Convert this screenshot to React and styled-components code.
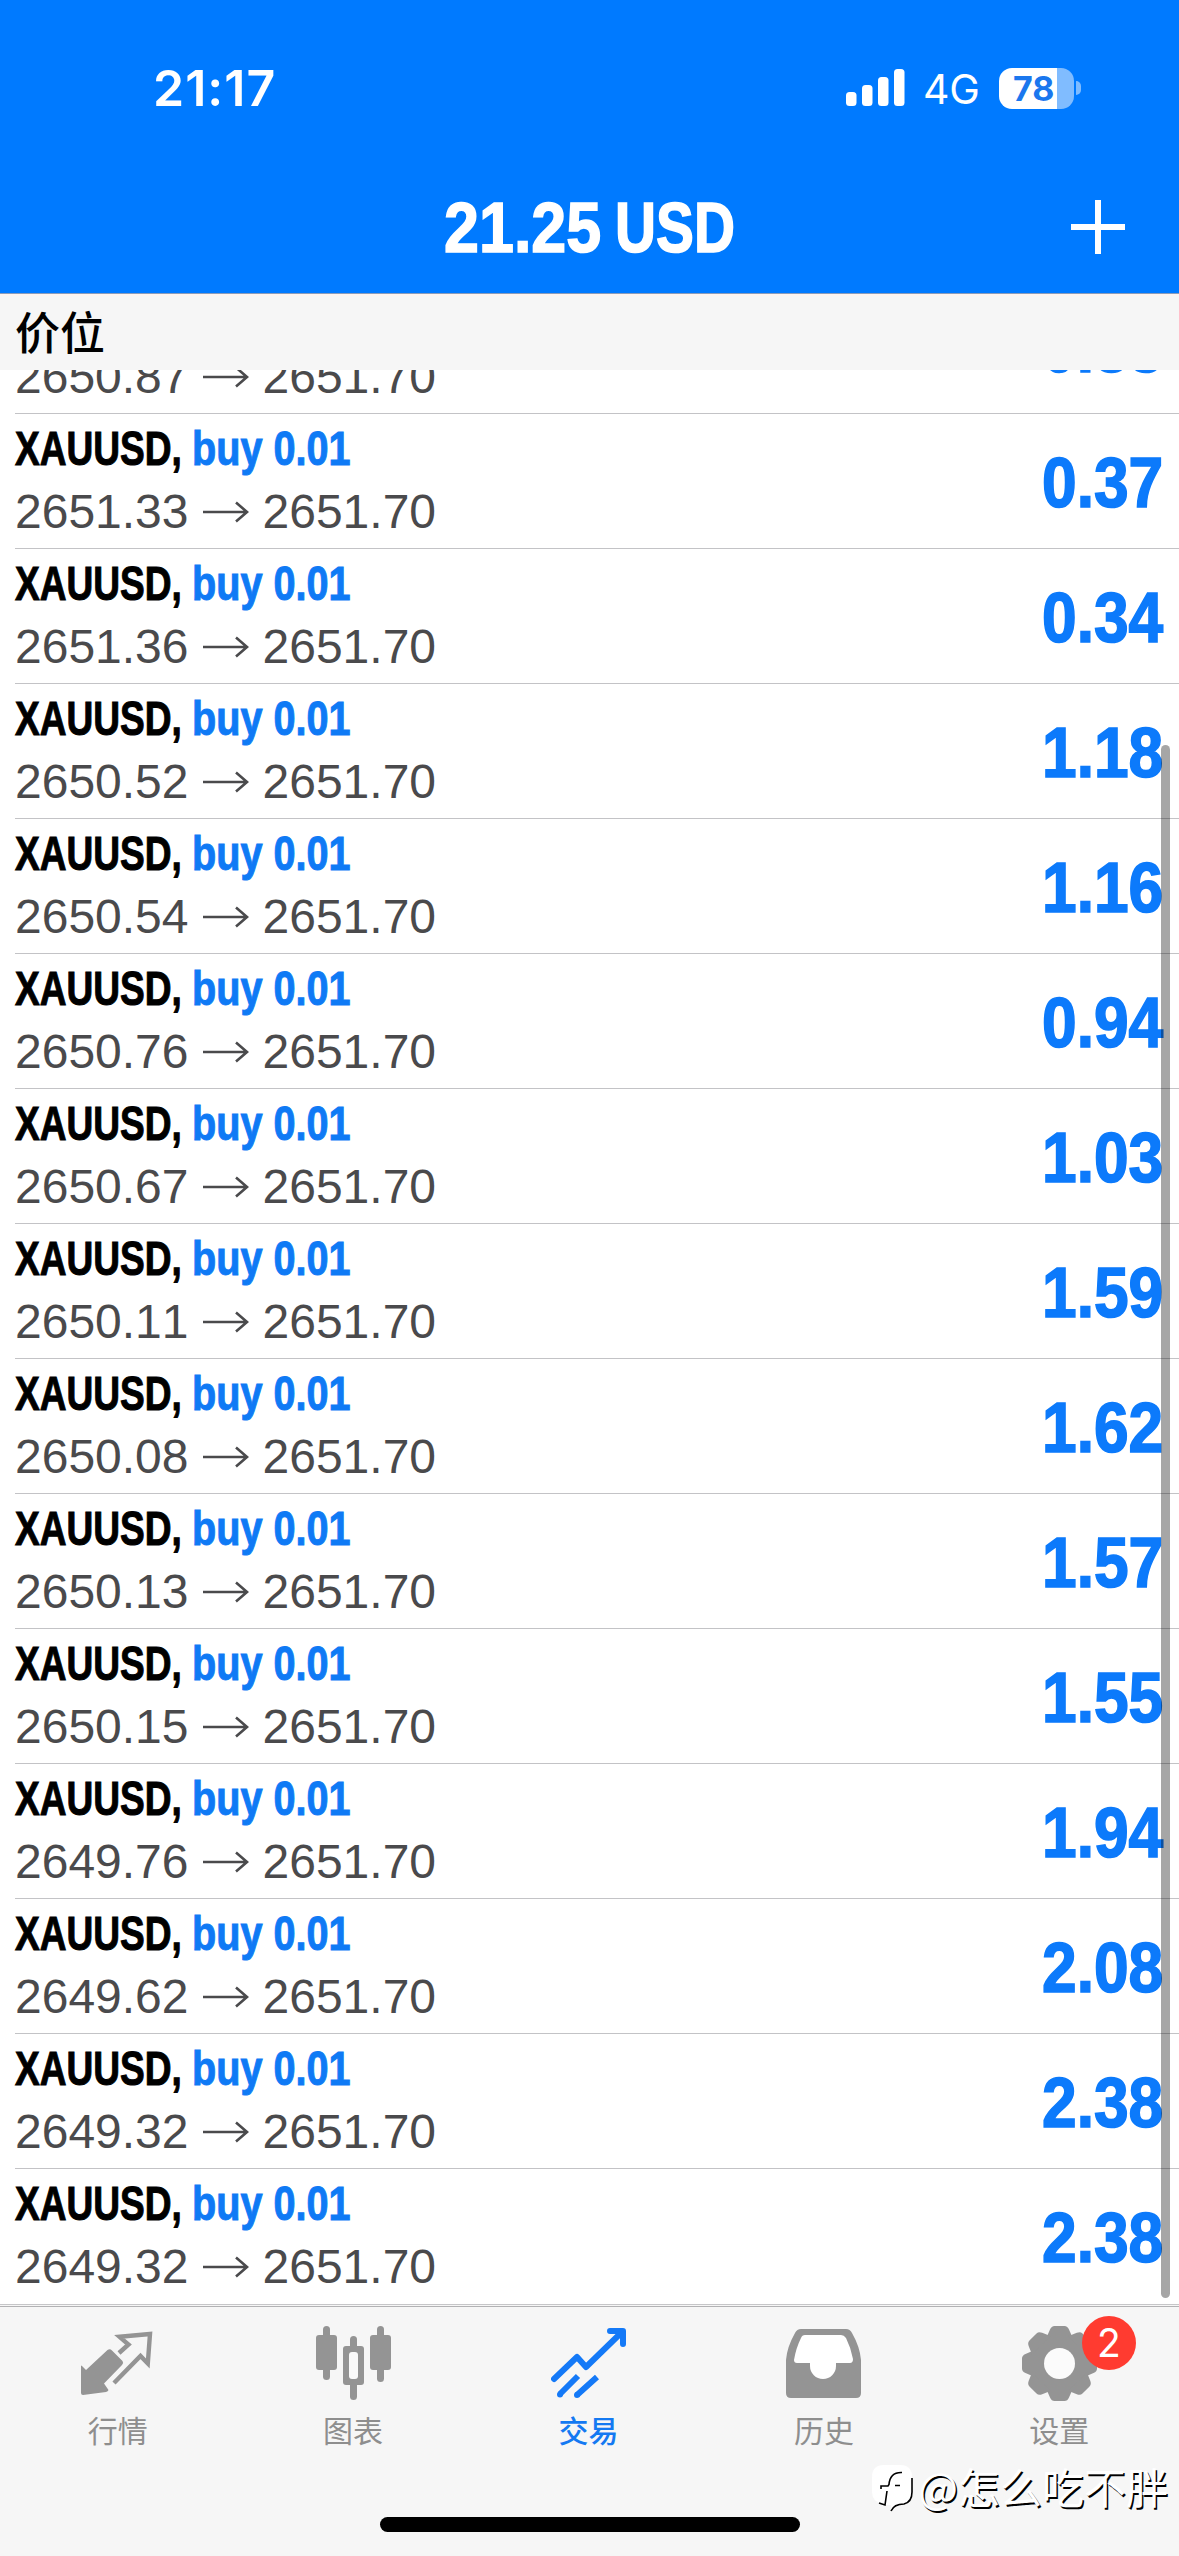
import React from 'react';
import styled, { createGlobalStyle } from 'styled-components';

const GlobalStyle = createGlobalStyle`
    html,
    body {
        margin: 0;
        padding: 0;
        background: #ffffff;
    }

    * {
        box-sizing: border-box;
    }
`;

const sans = `'Liberation Sans', Arial, 'Noto Sans CJK SC', sans-serif`;
const system = `Inter, 'Noto Sans CJK SC', sans-serif`;
const cjk = `'Noto Sans CJK SC', sans-serif`;

const Screen = styled.div`
    position: relative;
    display: flex;
    flex-direction: column;
    width: 1179px;
    height: 2556px;
    overflow: hidden;
    background: #ffffff;
    font-family: ${sans};
    font-kerning: none;
`;

const Header = styled.header`
    flex: none;
    height: 294px;
    background: #007aff;
    border-bottom: 1px solid #8a9cba;
    color: #ffffff;
`;

const StatusBar = styled.div`
    display: flex;
    align-items: center;
    height: 160px;
    padding: 16px 98px 0 153px;
    font-family: ${system};
`;

const Clock = styled.div`
    flex: 1;
    font-size: 50px;
    font-weight: 600;
    letter-spacing: 1px;
`;

const Signal = styled.svg`
    width: 60px;
    height: 38px;
    margin-right: 2px;
`;

const Network = styled.div`
    width: 58px;
    margin: 2px 18px 0 16px;
    font-size: 41px;
    letter-spacing: -0.2px;
`;

const Battery = styled.div`
    display: flex;
    align-items: center;
    gap: 2px;
`;

const BatteryBody = styled.div`
    width: 75px;
    height: 41px;
    border-radius: 13px;
    background: linear-gradient(
        to right,
        #ffffff ${props => props.$level}%,
        #80bcff ${props => props.$level}%
    );
    color: #1a77ee;
    font-size: 34px;
    font-weight: 700;
    line-height: 41px;
    letter-spacing: -0.5px;
    padding-left: 14px;
`;

const BatteryTip = styled.div`
    width: 5px;
    height: 14px;
    border-radius: 0 6px 6px 0;
    background: #80bcff;
`;

const NavBar = styled.div`
    display: grid;
    grid-template-columns: 1fr 294px 1fr;
    align-items: center;
    height: 133px;
    padding-right: 53px;
    padding-left: 56px;
`;

const Condensed = styled.span`
    display: inline-block;
    transform: scaleX(${props => props.$scale});
    transform-origin: ${props => props.$origin || 'left'} center;
    white-space: pre;
    font-weight: 700;
    -webkit-text-stroke: ${props => props.$stroke || 1}px currentColor;
`;

const Title = styled.h1`
    grid-column: 2;
    display: flex;
    justify-content: space-between;
    margin: 2px 0 0;
    font-size: 71px;
    line-height: 80px;
`;

const TitlePart = styled.span`
    display: flex;
    width: ${props => props.$width}px;
`;

const AddIcon = styled.svg`
    justify-self: end;
    width: 56px;
    height: 56px;
`;

const SectionHeader = styled.div`
    flex: none;
    height: 76px;
    padding-left: 15px;
    background: #f6f6f6;
    border-top: 2px solid #fdf4f0;
    font-family: ${cjk};
    font-size: 45px;
    font-weight: 500;
    line-height: 69px;
    color: #000000;
`;

const List = styled.div`
    flex: none;
    display: flex;
    flex-direction: column;
    justify-content: flex-end;
    height: 1934px;
    padding-bottom: 1px;
    overflow: hidden;
`;

const Row = styled.div`
    flex: none;
    display: flex;
    justify-content: space-between;
    align-items: center;
    height: 135px;
    margin-left: 15px;
    padding-right: 16px;
    border-top: 1px solid #c3c3c6;
`;

const Symbol = styled.div`
    display: flex;
    height: 62px;
    padding-top: 4px;
    font-size: 48px;
    line-height: 56px;
    color: #000000;
    visibility: ${props => (props.$scrolledOut ? 'hidden' : 'visible')};
`;

const SymbolName = styled.div`
    width: 177px;
`;

const Action = styled.div`
    color: #0f7af5;
`;

const Prices = styled.div`
    display: flex;
    align-items: center;
    height: 66px;
    padding-bottom: 1px;
    font-size: 48px;
    line-height: 56px;
    color: #4a4a4c;
`;

const ArrowIcon = styled.svg`
    width: 48px;
    height: 24px;
    margin: 1px 13px 0;
`;

const Profit = styled.div`
    padding-top: 4px;
    color: #0c7afb;
    font-size: 70px;
    line-height: 80px;
`;

const ScrollThumb = styled.div`
    position: absolute;
    top: 745px;
    right: 9px;
    width: 9px;
    height: 1553px;
    border-radius: 5px;
    background: rgba(0, 0, 0, 0.35);
`;

const TabBar = styled.nav`
    flex: 1;
    display: flex;
    flex-direction: column;
    align-items: center;
    border-top: 1px solid #c6c6c8;
    background: #f6f6f6;
`;

const Tabs = styled.div`
    display: grid;
    grid-template-columns: repeat(5, 1fr);
    width: 100%;
    height: 211px;
    padding-right: 2px;
    border-top: 1px solid #b2b2b4;
    margin-top: 1px;
`;

const Tab = styled.div`
    display: flex;
    flex-direction: column;
    align-items: center;
    padding-top: 19px;
    font-family: ${cjk};
    font-size: 30px;
    font-weight: ${props => (props.$active ? 500 : 400)};
    line-height: 40px;
    color: ${props => (props.$active ? '#1479f2' : '#8e8e8e')};
`;

const IconBox = styled.div`
    position: relative;
    width: 75px;
    height: 75px;
    margin-bottom: 8px;

    svg {
        display: block;
        width: 75px;
        height: 75px;
    }
`;

const Badge = styled.div`
    position: absolute;
    top: -10px;
    left: 60px;
    width: 54px;
    height: 54px;
    border-radius: 50%;
    background: #ff3b30;
    color: #ffffff;
    font-family: ${system};
    font-size: 39px;
    font-weight: 400;
    line-height: 54px;
    text-align: center;
`;

const HomeIndicator = styled.div`
    width: 420px;
    height: 15px;
    border-radius: 8px;
    background: #000000;
`;

const Watermark = styled.div`
    position: absolute;
    right: 11px;
    bottom: 40px;
    display: flex;
    align-items: center;
    gap: 3px;
    font-family: ${cjk};
    font-size: 42px;
    line-height: 60px;
    color: #ffffff;
    text-shadow: 1.5px 1.5px 0 #000000;
    white-space: nowrap;

    svg {
        width: 44px;
        height: 48px;
        margin-top: 4px;
    }
`;

const QuotesIcon = () => (
    <svg viewBox='0 0 75 75' fill='none'>
        <path
            d='M1 40Q1 39 2 40L6 44 27.500 24Q30 22.500 32 24.500L42.500 35Q44 37 42 39L24 57.500 28.500 64Q28 65.500 26 66L3 69Q1 69 1 67Z'
            fill='#949494'
        />
        <path
            d='M39 27 48.500 18.500 39.500 10.800 70 8 67.800 37.500 60.500 30 34 57'
            stroke='#949494'
            strokeWidth='4.400'
        />
    </svg>
);

const ChartIcon = () => (
    <svg viewBox='0 0 75 75' fill='#949494'>
        <rect x='7' y='0' width='7' height='54' rx='3.5' />
        <rect x='0' y='9' width='21' height='35' rx='3' />
        <rect x='61' y='0' width='7' height='56' rx='3.5' />
        <rect x='54' y='9' width='21' height='35' rx='3' />
        <rect x='34' y='10' width='7' height='64' rx='3.5' />
        <rect x='27' y='20' width='21' height='39' rx='3' />
        <rect x='33' y='26' width='9' height='27' rx='3' fill='#f9f9f9' />
    </svg>
);

const TradeIcon = () => (
    <svg
        viewBox='0 0 75 75'
        fill='none'
        stroke='#1479f7'
        strokeWidth='6'
        strokeLinejoin='round'
    >
        <path d='M3 53 26 31 35 41 71 6' strokeLinecap='round' />
        <path d='M59 5H72V18' strokeLinecap='round' />
        <path d='M27 50 9 68M46 51 26 69' />
        <circle cx='9' cy='68.500' r='3' fill='#1479f7' stroke='none' />
        <circle cx='26' cy='69' r='3' fill='#1479f7' stroke='none' />
    </svg>
);

const HistoryIcon = () => (
    <svg viewBox='0 0 75 75'>
        <path
            d='M15 3H60Q64 3 66 7 74 21 75 34V67Q75 72 70 72H5Q0 72 0 67V34Q1 21 9 7 11 3 15 3Z'
            fill='#949494'
        />
        <path
            d='M19 9H55Q58 9 60 12 65 22 67 33 67 37 64 37H50V40A13 13 0 0 1 24 40V37H11Q8 37 8 34 10 22 15 12 16 9 19 9Z'
            fill='#ffffff'
        />
    </svg>
);

const GearIcon = () => (
    <svg viewBox='-37.5 -37.5 75 75' fill='#949494'>
        <circle r='29.5' />
        {[0, 45, 90, 135, 180, 225, 270, 315].map(angle => (
            <path
                key={angle}
                transform={`rotate(${angle})`}
                d='M-13 -26 -9.500 -34Q-8 -37.500 -5 -37.500H5Q8 -37.500 9.500 -34L13 -26Z'
            />
        ))}
        <circle r='15.5' fill='#fbfbfb' />
    </svg>
);

const positions = [
    { open: '2650.87', profit: '0.83', scrolledOut: true },
    { open: '2651.33', profit: '0.37' },
    { open: '2651.36', profit: '0.34' },
    { open: '2650.52', profit: '1.18' },
    { open: '2650.54', profit: '1.16' },
    { open: '2650.76', profit: '0.94' },
    { open: '2650.67', profit: '1.03' },
    { open: '2650.11', profit: '1.59' },
    { open: '2650.08', profit: '1.62' },
    { open: '2650.13', profit: '1.57' },
    { open: '2650.15', profit: '1.55' },
    { open: '2649.76', profit: '1.94' },
    { open: '2649.62', profit: '2.08' },
    { open: '2649.32', profit: '2.38' },
    { open: '2649.32', profit: '2.38' }
];

const tabs = [
    { label: '行情', Icon: QuotesIcon },
    { label: '图表', Icon: ChartIcon },
    { label: '交易', Icon: TradeIcon, active: true },
    { label: '历史', Icon: HistoryIcon },
    { label: '设置', Icon: GearIcon, badge: 2 }
];

const Position = ({ open, profit, scrolledOut }) => (
    <Row>
        <div>
            <Symbol $scrolledOut={scrolledOut}>
                <SymbolName>
                    <Condensed $scale={0.772}>XAUUSD,</Condensed>
                </SymbolName>
                <Action>
                    <Condensed $scale={0.825}>buy 0.01</Condensed>
                </Action>
            </Symbol>
            <Prices>
                <span>{open}</span>
                <ArrowIcon
                    viewBox='0 0 48 24'
                    fill='none'
                    stroke='#4a4a4c'
                    strokeWidth='2.6'
                >
                    <path d='M1 12H45M34 2.500 45 12 34 21.500' />
                </ArrowIcon>
                <span>2651.70</span>
            </Prices>
        </div>
        <Profit>
            <Condensed $scale={0.89} $origin='right' $stroke={1.6}>
                {profit}
            </Condensed>
        </Profit>
    </Row>
);

const App = () => (
    <Screen>
        <GlobalStyle />
        <Header>
            <StatusBar>
                <Clock>21:17</Clock>
                <Signal viewBox='0 0 60 38' fill='#ffffff'>
                    <rect x='1' y='23' width='10.500' height='14' rx='3.500' />
                    <rect x='17' y='16' width='10.500' height='21' rx='3.500' />
                    <rect x='33' y='8' width='10.500' height='29' rx='3.500' />
                    <rect x='49' y='0' width='10.500' height='37' rx='3.500' />
                </Signal>
                <Network>4G</Network>
                <Battery>
                    <BatteryBody $level={78}>78</BatteryBody>
                    <BatteryTip />
                </Battery>
            </StatusBar>
            <NavBar>
                <Title>
                    <TitlePart $width={158}>
                        <Condensed $scale={0.885} $stroke={1.6}>
                            21.25
                        </Condensed>
                    </TitlePart>
                    <TitlePart $width={123}>
                        <Condensed $scale={0.8} $stroke={1.6}>
                            USD
                        </Condensed>
                    </TitlePart>
                </Title>
                <AddIcon viewBox='0 0 56 56' stroke='#ffffff' strokeWidth='6'>
                    <path d='M28 1V55M1 28H55' />
                </AddIcon>
            </NavBar>
        </Header>
        <SectionHeader>价位</SectionHeader>
        <List>
            {positions.map((position, i) => (
                <Position key={i} {...position} />
            ))}
        </List>
        <TabBar>
            <Tabs>
                {tabs.map(({ label, Icon, active, badge }) => (
                    <Tab key={label} $active={active}>
                        <IconBox>
                            <Icon />
                            {badge && <Badge>{badge}</Badge>}
                        </IconBox>
                        {label}
                    </Tab>
                ))}
            </Tabs>
            <HomeIndicator />
        </TabBar>
        <ScrollThumb />
        <Watermark>
            <svg viewBox='0 0 44 48' fill='none'>
                <path
                    d='M13 1H29Q41 1 41 13V28Q41 38 33 40 24 41 20 46V41L13 41Q1 38 1 28V13Q1 1 13 1Z'
                    fill='#ffffff'
                />
                <path
                    d='M31 8.500Q19 8 18 20.500L17 22H10V25M24 21.500H29M16 27 14 41 8 39M41 14V28Q41 38 33 40 23 40 20 47'
                    stroke='#000000'
                    strokeWidth='1.6'
                />
            </svg>
            @怎么吃不胖
        </Watermark>
    </Screen>
);

export default App;
